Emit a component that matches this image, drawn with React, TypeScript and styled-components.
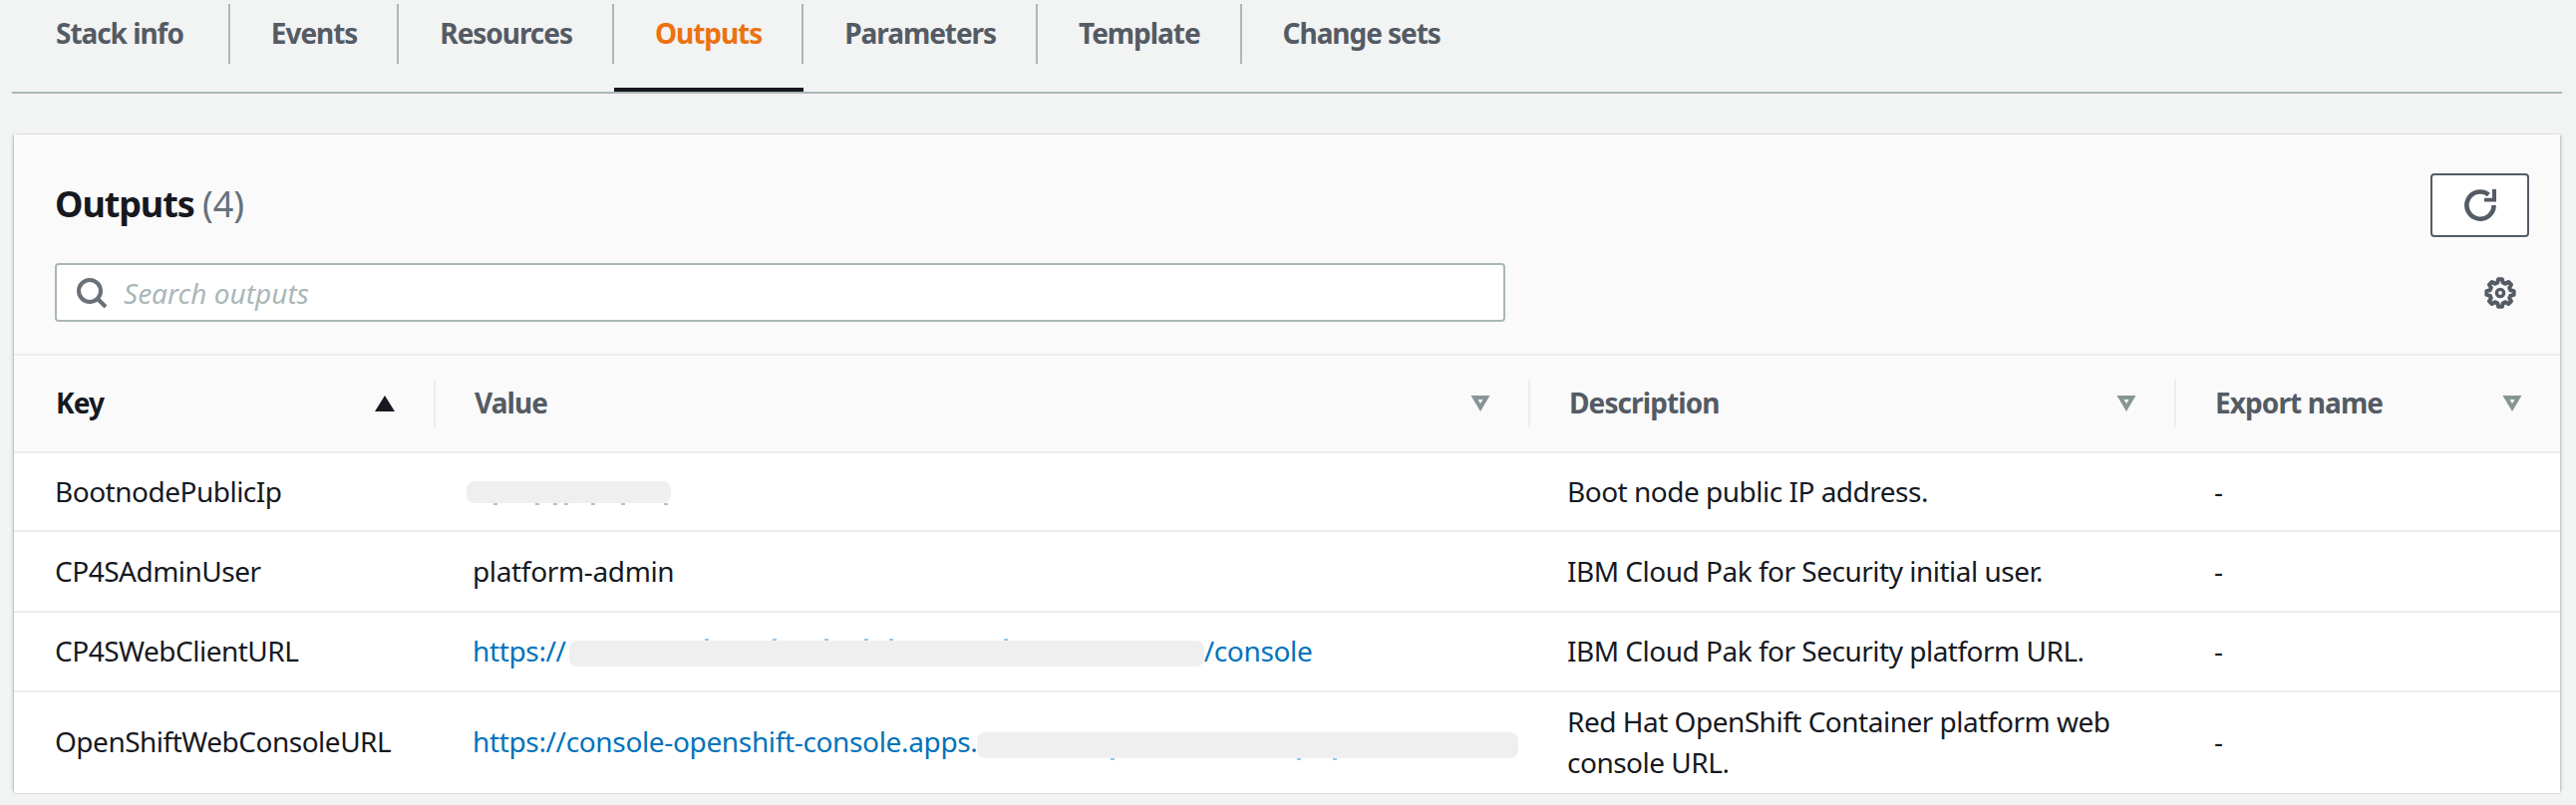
import React from 'react';
import styled, { createGlobalStyle } from 'styled-components';

const GlobalStyle = createGlobalStyle`
  html, body {
    margin: 0;
    padding: 0;
    background: #f2f3f3;
    font-family: "Noto Sans", "Open Sans", sans-serif;
    font-size: 28px;
    letter-spacing: -0.5px;
    color: #16191f;
  }
`;

const Page = styled.div`
  width: 2584px;
  height: 808px;
  overflow: hidden;
`;

const TabBar = styled.div`
  display: flex;
  height: 92px;
  margin: 0 14px 0 12px;
  border-bottom: 2px solid #aab7b8;
`;

const Tab = styled.div<{ $active?: boolean }>`
  height: 92px;
  box-sizing: border-box;
  padding-top: 4px;
  margin-bottom: -2px;
  border-bottom: 4px solid ${p => (p.$active ? '#16191f' : 'transparent')};
`;

const TabLabel = styled.div<{ $active?: boolean; $first?: boolean; $last?: boolean }>`
  height: 60px;
  line-height: 58px;
  padding: 0 ${p => (p.$first ? '45px' : '40px')} 0 ${p => (p.$first ? '44px' : '41px')};
  font-weight: 700;
  letter-spacing: -1.05px;
  white-space: nowrap;
  color: ${p => (p.$active ? '#ec7211' : '#545b64')};
  border-right: ${p => (p.$last ? 'none' : '2px solid #aab7b8')};
`;

const Card = styled.section`
  margin: 41px 16px 0 14px;
  height: 659px;
  background: #fff;
  box-shadow: 0 2px 1px 0 rgba(0, 28, 36, 0.5), 2px 0 2px 0 rgba(0, 28, 36, 0.12), -2px 0 2px 0 rgba(0, 28, 36, 0.12);
`;

const CardHeader = styled.div`
  background: #fafafa;
  padding: 39px 31px 32px 41px;
  border-bottom: 2px solid #eaeded;
`;

const TitleRow = styled.div`
  display: flex;
  justify-content: space-between;
  align-items: center;
  margin-bottom: 26px;
`;

const Title = styled.h2`
  margin: 0 0 3px;
  font-size: 36px;
  font-weight: 700;
  line-height: 50px;
  letter-spacing: -1.1px;
`;

const Count = styled.span`
  font-weight: 400;
  letter-spacing: 0;
  color: #687078;
`;

const RefreshButton = styled.button`
  width: 99px;
  height: 64px;
  display: flex;
  align-items: center;
  justify-content: center;
  padding: 0;
  background: #fff;
  border: 2px solid #545b64;
  border-radius: 4px;
`;

const SearchRow = styled.div`
  display: flex;
  justify-content: space-between;
  align-items: center;
`;

const SearchBox = styled.div`
  width: 1455px;
  height: 59px;
  box-sizing: border-box;
  display: flex;
  align-items: center;
  gap: 16px;
  padding-left: 19px;
  background: #fff;
  border: 2px solid #aab7b8;
  border-radius: 4px;
`;

const Placeholder = styled.span`
  font-style: italic;
  letter-spacing: 0;
  color: #aab7b8;
`;

const GearButton = styled.div`
  display: flex;
  margin-right: 13px;
`;

const HeadRow = styled.div`
  display: grid;
  grid-template-columns: 421px 1098px 648px 1fr;
  height: 96px;
  align-items: center;
  background: #fafafa;
  border-bottom: 2px solid #eaeded;
`;

const HeadCell = styled.div<{ $first?: boolean; $sorted?: boolean }>`
  height: 48px;
  display: flex;
  align-items: center;
  justify-content: space-between;
  box-sizing: border-box;
  padding: 0 38px 0 ${p => (p.$first ? '42px' : '39px')};
  border-left: ${p => (p.$first ? 'none' : '2px solid #eaeded')};
  font-weight: 700;
  letter-spacing: -0.9px;
  line-height: 44px;
  color: ${p => (p.$sorted ? '#16191f' : '#545b64')};
`;

const HeadLabel = styled.span`
  margin-bottom: 3px;
`;

const Row = styled.div<{ $height: number; $lift?: boolean; $last?: boolean }>`
  display: grid;
  grid-template-columns: 421px 1098px 648px 1fr;
  height: ${p => p.$height}px;
  box-sizing: border-box;
  align-items: center;
  padding-bottom: ${p => (p.$lift ? '2px' : '0')};
  background: #fff;
  border-bottom: ${p => (p.$last ? 'none' : '2px solid #eaeded')};
`;

const Cell = styled.div<{ $first?: boolean }>`
  padding-left: ${p => (p.$first ? '41px' : '40px')};
  line-height: 41px;
  white-space: nowrap;
`;

const ValueCell = styled(Cell)<{ $blank?: boolean }>`
  display: flex;
  align-items: center;
  height: 100%;
  box-sizing: border-box;
  padding-left: ${p => (p.$blank ? '33px' : '39px')};
`;

const DescCell = styled(Cell)`
  padding-left: 39px;
  white-space: normal;
`;

const PlainValue = styled(Cell)`
  padding-left: 39px;
  letter-spacing: -0.35px;
`;

const Link = styled.a`
  display: flex;
  align-items: center;
  color: #0073bb;
  letter-spacing: -0.35px;
  text-decoration: none;
  white-space: nowrap;
`;

const Redaction = styled.span<{ $width: number; $height: number; $drop?: number; $lead?: number }>`
  position: relative;
  display: block;
  flex: none;
  width: ${p => p.$width}px;
  height: ${p => p.$height}px;
  margin-top: ${p => p.$drop ?? 0}px;
  margin-left: ${p => p.$lead ?? 0}px;
  background: #efefef;
  border-radius: 8px;
`;

// bits of the blurred-out text that stick out of the redaction box
const Peek = styled.i<{ $left: number; $top?: boolean; $color: string }>`
  position: absolute;
  left: ${p => p.$left}px;
  ${p => (p.$top ? 'top: -2px;' : 'bottom: -2px;')}
  width: 4px;
  height: 2px;
  background: ${p => p.$color};
  opacity: 0.4;
`;

const SearchIcon = () => (
  <svg width="32" height="32" viewBox="0 0 16 16" fill="none" stroke="#687078" strokeWidth="2">
    <circle cx="7" cy="7" r="5.500" />
    <path d="M11 11l4 4" />
  </svg>
);

const RefreshIcon = () => (
  <svg width="32" height="32" viewBox="0 0 16 16" fill="none">
    <path d="M14.800 8a6.800 6.800 0 1 1-2.600-5.300" stroke="#545b64" strokeWidth="2.300" />
    <path d="M10 4.400h4V0h2v6.200h-6z" fill="#545b64" />
  </svg>
);

const gearPath = (() => {
  const pts: string[] = [];
  const at = (r: number, deg: number) => {
    const a = (deg * Math.PI) / 180;
    return `${(8 + r * Math.cos(a)).toFixed(2)} ${(8 + r * Math.sin(a)).toFixed(2)}`;
  };
  for (let k = 0; k < 8; k++) {
    const c = k * 45 - 90;
    pts.push(at(5.3, c - 15), at(6.900, c - 8), at(6.900, c + 8), at(5.3, c + 15));
  }
  return `M${pts.join('L')}z`;
})();

const GearIcon = () => (
  <svg width="32" height="32" viewBox="0 0 16 16" fill="none" stroke="#545b64" strokeWidth="2" strokeLinejoin="round">
    <circle cx="8" cy="8" r="1.800" strokeWidth="1.700" />
    <path d={gearPath} />
  </svg>
);

const SortAscIcon = () => (
  <svg width="22" height="18" viewBox="0 0 22 18">
    <path d="M11 1l10 16H1z" fill="#16191f" />
  </svg>
);

const SortIcon = () => (
  <svg width="20" height="18" viewBox="0 0 20 18" fill="none" stroke="#879596" strokeWidth="4">
    <path d="M4 3h12l-6 10z" />
  </svg>
);

const tabs = ['Stack info', 'Events', 'Resources', 'Outputs', 'Parameters', 'Template', 'Change sets'];

export default function App() {
  return (
    <Page>
      <GlobalStyle />
      <TabBar>
        {tabs.map((t, i) => (
          <Tab key={t} $active={t === 'Outputs'}>
            <TabLabel $active={t === 'Outputs'} $first={i === 0} $last={i === tabs.length - 1}>{t}</TabLabel>
          </Tab>
        ))}
      </TabBar>
      <Card>
        <CardHeader>
          <TitleRow>
            <Title>Outputs <Count>(4)</Count></Title>
            <RefreshButton aria-label="Refresh"><RefreshIcon /></RefreshButton>
          </TitleRow>
          <SearchRow>
            <SearchBox>
              <SearchIcon />
              <Placeholder>Search outputs</Placeholder>
            </SearchBox>
            <GearButton><GearIcon /></GearButton>
          </SearchRow>
        </CardHeader>
        <HeadRow>
          <HeadCell $first $sorted><HeadLabel>Key</HeadLabel> <SortAscIcon /></HeadCell>
          <HeadCell><HeadLabel>Value</HeadLabel> <SortIcon /></HeadCell>
          <HeadCell><HeadLabel>Description</HeadLabel> <SortIcon /></HeadCell>
          <HeadCell><HeadLabel>Export name</HeadLabel> <SortIcon /></HeadCell>
        </HeadRow>
        <Row $height={79}>
          <Cell $first>BootnodePublicIp</Cell>
          <ValueCell $blank>
            <Redaction $width={205} $height={22}>
              {[27, 69, 87, 98, 125, 155, 198].map(x => <Peek key={x} $left={x} $color="#545b64" />)}
            </Redaction>
          </ValueCell>
          <DescCell>Boot node public IP address.</DescCell>
          <Cell>-</Cell>
        </Row>
        <Row $height={81}>
          <Cell $first>CP4SAdminUser</Cell>
          <PlainValue>platform-admin</PlainValue>
          <DescCell>IBM Cloud Pak for Security initial user.</DescCell>
          <Cell>-</Cell>
        </Row>
        <Row $height={80} $lift>
          <Cell $first>CP4SWebClientURL</Cell>
          <ValueCell>
            <Link href="#">
              https://
              <Redaction $width={637} $height={26} $drop={6} $lead={3}>
                {[136, 204, 256, 296, 321, 436].map(x => <Peek key={x} $left={x} $top $color="#0073bb" />)}
              </Redaction>
              /console
            </Link>
          </ValueCell>
          <DescCell>IBM Cloud Pak for Security platform URL.</DescCell>
          <Cell>-</Cell>
        </Row>
        <Row $height={101} $lift $last>
          <Cell $first>OpenShiftWebConsoleURL</Cell>
          <ValueCell>
            <Link href="#">
              https://console-openshift-console.apps.
              <Redaction $width={543} $height={26} $drop={6}>
                {[134, 321, 357].map(x => <Peek key={x} $left={x} $color="#0073bb" />)}
              </Redaction>
            </Link>
          </ValueCell>
          <DescCell>Red Hat OpenShift Container platform web console URL.</DescCell>
          <Cell>-</Cell>
        </Row>
      </Card>
    </Page>
  );
}
